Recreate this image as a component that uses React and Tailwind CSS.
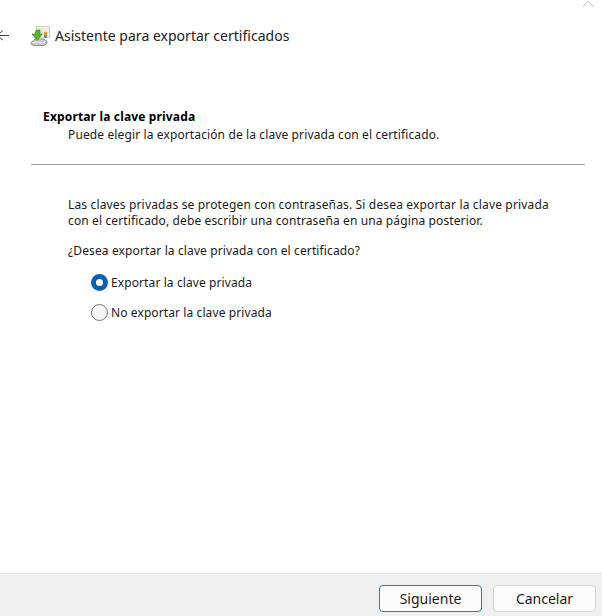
export default function App() {
  const font = "font-['Noto_Sans',sans-serif]";
  return (
    <div className={`${font} h-[616px] w-[602px] bg-white flex flex-col relative overflow-hidden text-[#1a1a1a]`}>
      <svg className="absolute left-[582px] top-0" width="16" height="8" viewBox="0 0 16 8" fill="none" stroke="#c4c4c4"><path d="M1 7 L6 1 L12 7" /></svg>
      <div className="h-[72px] flex items-center shrink-0">
        <svg width="9" height="12" viewBox="0 0 9 12" fill="none" stroke="#444" strokeWidth="1"><path d="M0 5.5H9M3 0.5 L0 3M3 10 L0 8" /></svg>
        <svg className="ml-[21px] mb-[1px]" width="21" height="22" viewBox="0 0 21 22">
          <rect x="6.5" y="1.5" width="13" height="11" fill="#f7f4e6" stroke="#cfcdb8" />
          <path d="M9 4h8M9 6h5" stroke="#e2dec8" />
          <path d="M14 10l0.5 3h2l0.5-3z" fill="#4a78c0" />
          <circle cx="15.5" cy="8.5" r="1.9" fill="#e0a030" />
          <path d="M1 17.5 L5 14 H14 L17 16.5 V18.5 L14 20.5 H3.5 L1 19Z" fill="#c4c9cc" stroke="#6f7478" strokeWidth="0.7" />
          <path d="M2.5 17.5 H15" stroke="#eef0f1" />
          <path d="M6 5 H10 V9 H12.5 L7 15.5 L2 9 H5Z" fill="#5bb030" stroke="#3a8a22" strokeWidth="0.6" />
        </svg>
        <span className="ml-[4px] text-[14px] tracking-[0.02px] text-[#222] leading-5">Asistente para exportar certificados</span>
      </div>
      <div className="pl-[43px] pt-[37px] text-[12px] leading-[16px] tracking-[0.12px]">
        <div className="font-bold text-black tracking-[0.16px]">Exportar la clave privada</div>
        <div className="pl-[25px] mt-[2px]">Puede elegir la exportación de la clave privada con el certificado.</div>
      </div>
      <div className="ml-[31px] mr-[17px] mt-[21px] h-px bg-[#a0a0a0]" />
      <div className="pl-[68px] pt-[32px] text-[12px] leading-[16px] tracking-[0.12px]">
        <p><span className="tracking-[0.16px]">Las claves privadas se protegen con contraseñas. Si desea exportar la clave privada</span><br />con el certificado, debe escribir una contraseña en una página posterior.</p>
        <p className="mt-[14px]">¿Desea exportar la clave privada con el certificado?</p>
      </div>
      <div className="pl-[91px] pt-[15px] flex flex-col gap-[13px] text-[12px] leading-[16px] tracking-[0.1px]">
        <label className="flex items-center gap-[3px]">
          <span className="w-[17px] h-[17px] rounded-full bg-[#0a5fb0] flex items-center justify-center"><span className="w-[7px] h-[7px] rounded-full bg-white" /></span>
          Exportar la clave privada
        </label>
        <label className="flex items-center gap-[3px]">
          <span className="w-[17px] h-[17px] rounded-full bg-[#f5f5f5] border border-[#767676]" />
          No exportar la clave privada
        </label>
      </div>
      <div className="mt-auto h-[43px] bg-[#f0f0f0] border-t border-[#e4e4e4] flex items-start justify-end gap-[11px] pt-[11px] pr-[6px] text-[14px]">
        <button className="w-[103px] h-[27px] rounded-[4px] bg-[#fcfcfc] border border-[#2b7cb0] leading-none">Siguiente</button>
        <button className="w-[103px] h-[27px] rounded-[4px] bg-[#fcfcfc] border border-[#d6d6d6] leading-none">Cancelar</button>
      </div>
    </div>
  );
}
